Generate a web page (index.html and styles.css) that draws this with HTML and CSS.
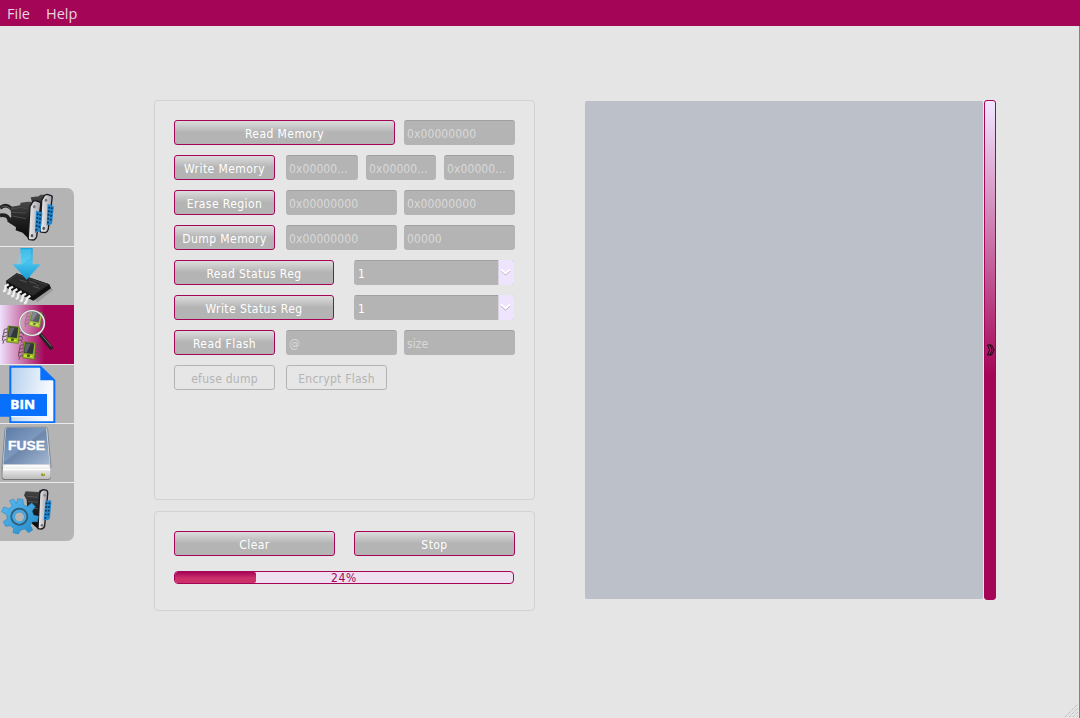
FILE: index.html
```html
<!DOCTYPE html>
<html lang="en">
<head>
<meta charset="utf-8">
<title>Flash tool</title>
<link rel="stylesheet" href="styles.css">
</head>
<body>
<div class="app">
  <nav class="menubar"><span>File</span><span>Help</span></nav>
  <main class="content">
    <aside class="tabs">
      <svg width="0" height="0" class="defs">
        <defs>
          <linearGradient id="metal"><stop offset="0" stop-color="#f0f0f2"/><stop offset="1" stop-color="#a0a0aa"/></linearGradient>
          <linearGradient id="dark" x2="0" y2="1"><stop offset="0" stop-color="#484848"/><stop offset=".5" stop-color="#202020"/><stop offset="1" stop-color="#080808"/></linearGradient>
          <linearGradient id="arrow" x2="0" y2="1"><stop offset="0" stop-color="#18a5dc"/><stop offset=".45" stop-color="#48c3ee"/><stop offset="1" stop-color="#159bd5"/></linearGradient>
          <linearGradient id="page" x2="1" y2=".2"><stop offset="0" stop-color="#b4cfed"/><stop offset="1" stop-color="#fafcff"/></linearGradient>
          <linearGradient id="disk" x2="1" y2="1"><stop offset="0" stop-color="#5b7aa5"/><stop offset=".45" stop-color="#7d98bd"/><stop offset=".5" stop-color="#6d87ab"/><stop offset="1" stop-color="#a7bad5"/></linearGradient>
          <linearGradient id="base" x2="0" y2="1"><stop offset="0" stop-color="#fff"/><stop offset="1" stop-color="#bdbdbd"/></linearGradient>
          <linearGradient id="gear" x2="1" y2="1"><stop offset="0" stop-color="#5bbcf0"/><stop offset="1" stop-color="#2389ca"/></linearGradient>
          <linearGradient id="lens" x2="1" y2="1"><stop offset="0" stop-color="#fff" stop-opacity=".35"/><stop offset="1" stop-color="#fff" stop-opacity=".05"/></linearGradient>
          <g id="plug">
            <path d="M90 80 98 66Q101 62 107 62L119 66Q124 68 122 74L110 170Q108 178 101 180L88 179Q84 178 85 173Z" fill="url(#metal)" stroke="#1a1a1a" stroke-width="4"/>
            <path d="M108 92 125 97Q128 98 127 102L122 151Q121 155 117 155L105 158Z" fill="#2487cc"/>
            <g fill="#062f54"><circle cx="113" cy="103" r="3"/><circle cx="121" cy="105" r="3"/><circle cx="112" cy="114" r="3"/><circle cx="120" cy="116" r="3"/><circle cx="111" cy="125" r="3"/><circle cx="119" cy="128" r="3"/><circle cx="110" cy="137" r="3"/><circle cx="118" cy="140" r="3"/><circle cx="109" cy="149" r="3"/></g>
            <ellipse cx="103" cy="80" rx="4" ry="5" fill="#777"/><ellipse cx="96" cy="167" rx="4" ry="5" fill="#555"/>
          </g>
          <g id="chip">
            <path d="M24 86 13 88 11 98M23 96 11 99 8 111M22 107 9 110 7 122M20 118 11 121 9 131M56 86 66 86 69 95M56 98 66 98 72 107M55 110 65 109 68 119M53 121 64 120 67 128" fill="none" stroke="#5f4a52" stroke-width="2.8"/>
            <path d="M24 78 59 81 55 130 20 126Z" fill="#9dc022" stroke="#55701a" stroke-width="2"/>
            <path d="M28 80 54 83 50 113 24 110Z" fill="#31373c" stroke="#1c2220" stroke-width="1.5"/>
            <path d="M29 82 44 83 32 110 25 109Z" fill="#5d656b"/><path d="M24 119 32 120M39 121 49 122" stroke="#dbe84b" stroke-width="4"/><path d="M34 115 42 116 41 123 33 122Z" fill="#46581d"/>
          </g>
        </defs>
      </svg>
      <div class="tab">
        <svg viewBox="0 24 222 174">
          <path d="M0 84Q17 70 32 84L48 98M0 106Q21 103 26 116T45 126" fill="none" stroke="#222" stroke-width="11"/>
          <path d="M2 82Q18 73 31 87" fill="none" stroke="#777" stroke-width="2"/>
          <path d="M92 52 116 49 121 44 148 44 151 60 132 145 116 143Z" fill="url(#dark)"/>
          <use href="#plug" transform="translate(38 -17) scale(.97)"/>
          <path d="M31 81 60 76 62 68 83 65 98 66 90 80 86 176 68 158 47 151 48 142 21 124 34 110Z" fill="url(#dark)"/>
          <path d="M34 87 62 82 82 86M33 97 78 99M38 108 78 116" fill="none" stroke="#4b4b4b" stroke-width="3"/>
          <use href="#plug"/>
        </svg>
      </div>
      <div class="tab">
        <svg viewBox="0 201 222 174">
          <path d="M101 357 151 321 160 330 112 367Z" fill="#888" opacity=".6"/>
          <path d="M19 302 50 280 148 313 153 325 100 362 19 323Z" fill="#111"/>
          <path d="M19 302 50 280 148 313 99 347Z" fill="#2b2b2b"/><path d="M24 302 51 284 139 314" fill="none" stroke="#444" stroke-width="2"/>
          <path d="M60 300 80 306M87 304 107 311M99 319 119 325M108 315 116 318" stroke="#555" stroke-width="3"/>
          <path d="M26 313 17 318 15 332 9 334M39 320 30 325 28 340 22 342M52 327 43 332 40 347 34 350M65 334 56 339 53 354 47 357M78 341 69 346 66 361 60 364M91 347 82 353 78 367 72 370" fill="none" stroke="#f0f0f0" stroke-width="7"/>
          <path d="M61 204H98V253H122L80 299 38 253H64Z" fill="url(#arrow)"/><path d="M64 208H94V235Q79 240 67 253H48Z" fill="#73daf8" opacity=".4"/>
        </svg>
      </div>
      <div class="tab active">
        <svg viewBox="0 15 222 177">
          <use href="#chip"/>
          <use href="#chip" transform="translate(69 -40) rotate(5 40 100) scale(.94)"/>
          <use href="#chip" transform="translate(48 48)"/>
          <circle cx="96" cy="69" r="37" fill="url(#lens)" stroke="#777" stroke-width="6"/><circle cx="96" cy="69" r="37" fill="none" stroke="#eee" stroke-width="4"/>
          <path d="M115 98 125 108" stroke="#eee" stroke-width="7"/><path d="M123 106 153 143" stroke="#222" stroke-width="12" stroke-linecap="round"/><path d="M124 104 154 139" stroke="#777" stroke-width="3"/>
        </svg>
      </div>
      <div class="tab">
        <svg viewBox="0 195 222 174">
          <path d="M31 200H121L163 241V367H31Z" fill="url(#page)" stroke="#0870fc" stroke-width="6"/>
          <path d="M121 199V241H164Z" fill="#0870fc"/><path d="M0 282H141V350H0Z" fill="#0870fc"/><path d="M33 350H143V284" fill="none" stroke="#ecf6ff" stroke-width="4"/>
          <text x="31" y="328" class="bin-label" textLength="74" lengthAdjust="spacingAndGlyphs">BIN</text>
        </svg>
      </div>
      <div class="tab">
        <svg viewBox="0 12 222 174">
          <path d="M5 140H153V171Q152 180 144 180H13Q5 179 5 171Z" fill="#777"/>
          <path d="M23 22H136Q142 22 143 29L153 142H6L15 29Q16 22 23 22Z" fill="#ddd" stroke="#56687c" stroke-width="2"/>
          <path d="M21 24H138L149 133H10L18 29Z" fill="url(#disk)"/>
          <path d="M8 148Q8 135 18 135H140Q151 135 152 148V169Q152 177 143 177H15Q7 177 7 169Z" fill="url(#base)"/>
          <path d="M9 149H151" stroke="#fff" stroke-width="3"/><ellipse cx="129" cy="164" rx="6" ry="4" fill="#888a12"/><circle cx="130" cy="162" r="2.5" fill="#f6f35c"/>
          <text x="24" y="91" class="fuse-label" textLength="111" lengthAdjust="spacingAndGlyphs">FUSE</text>
        </svg>
      </div>
      <div class="tab">
        <svg viewBox="0 189 222 174">
          <path d="M77 214 116 216 119 210 140 209 133 321 112 325 84 301 80 239 72 226Z" fill="url(#dark)"/>
          <path d="M81 229 113 232M84 244 114 247M91 263 113 266" stroke="#666" stroke-width="2"/>
          <path d="M119 221Q121 211 130 209L140 211Q144 213 143 222L134 317Q133 325 125 327L114 326Z" fill="url(#metal)" stroke="#1a1a1a" stroke-width="4"/>
          <path d="M136 243 151 241Q155 242 154 248L150 293Q149 299 144 300L131 301Z" fill="#2487cc"/>
          <g fill="#062f54"><circle cx="140" cy="250" r="2.8"/><circle cx="148" cy="250" r="2.8"/><circle cx="139" cy="261" r="2.8"/><circle cx="147" cy="261" r="2.8"/><circle cx="138" cy="272" r="2.8"/><circle cx="146" cy="272" r="2.8"/><circle cx="137" cy="283" r="2.8"/><circle cx="145" cy="283" r="2.8"/><circle cx="136" cy="294" r="2.8"/></g>
          <circle cx="134" cy="226" r="4" fill="#888"/><circle cx="126" cy="316" r="4" fill="#777"/>
          <path fill-rule="evenodd" d="M49 251 53 236 69 239 70 254 82 260 95 249 106 260 96 273 101 286 115 289 112 305 97 305 91 316 98 330 85 338 75 327 62 331 55 342 39 338 41 325 31 317 17 319 10 305 22 297 20 284 5 275 11 261 28 266 36 257 29 242 41 237ZM58 276A15 15 0 1 0 59 306A15 15 0 1 0 58 276Z" fill="url(#gear)" stroke="#2d8dc6" stroke-width="2"/>
          <circle cx="58" cy="290" r="24" fill="none" stroke="#315f7c" stroke-width="6"/><circle cx="58" cy="290" r="18" fill="none" stroke="#4aa8de" stroke-width="6"/>
        </svg>
      </div>
    </aside>
    <section class="controls">
      <div class="group commands">
        <div class="row"><button class="btn w221">Read Memory</button><span class="field ml9 w111">0x00000000</span></div>
        <div class="row"><button class="btn w101">Write Memory</button><span class="field ml11 w72">0x00000...</span><span class="field ml8 w70">0x00000...</span><span class="field ml8 w70">0x00000...</span></div>
        <div class="row"><button class="btn w101">Erase Region</button><span class="field ml11 w111">0x00000000</span><span class="field ml7 w111">0x00000000</span></div>
        <div class="row"><button class="btn w101">Dump Memory</button><span class="field ml11 w111">0x00000000</span><span class="field ml7 w111">00000</span></div>
        <div class="row"><button class="btn w160">Read Status Reg</button><span class="combo"><span class="value">1</span><span class="drop"><svg viewBox="0 0 15 25"><path d="M2 10.5 6.5 14.5 11 10.5" class="chevron-shadow"/><path d="M2 9.5 6.5 13.5 11 9.5" class="chevron"/></svg></span></span></div>
        <div class="row"><button class="btn w160">Write Status Reg</button><span class="combo"><span class="value">1</span><span class="drop"><svg viewBox="0 0 15 25"><path d="M2 10.5 6.5 14.5 11 10.5" class="chevron-shadow"/><path d="M2 9.5 6.5 13.5 11 9.5" class="chevron"/></svg></span></span></div>
        <div class="row"><button class="btn w101">Read Flash</button><span class="field ml11 w111">@</span><span class="field ml7 w111">size</span></div>
        <div class="row"><button class="btn disabled w101">efuse dump</button><button class="btn disabled ml11 w101">Encrypt Flash</button></div>
      </div>
      <div class="group actions">
        <div class="row"><button class="btn w161">Clear</button><button class="btn ml19 w161">Stop</button></div>
        <div class="progress"><div class="chunk" style="width:81px"></div><span class="percent">24%</span></div>
      </div>
    </section>
    <div class="log"></div>
    <div class="splitter"><svg viewBox="0 0 10 12"><path d="M1.5 1H4L6.2 6 4 11H1.5L3.6 6ZM4 1H5.5L8.2 6 5.5 11H4"/></svg></div>
  </main>
  <svg class="grip" viewBox="0 0 15 15"><path d="M1 14 14 1M5 14 14 5M9 14 14 9M13 14 14 13"/></svg>
</div>
</body>
</html>
```
FILE: styles.css
```css
* { box-sizing: border-box; }
body { margin: 0; background: #e5e5e5; font: 12px "DejaVu Sans Condensed", "DejaVu Sans", sans-serif; font-stretch: condensed; }
.app { position: relative; width: 1080px; height: 718px; overflow: hidden; }
.app::after { content: ""; position: absolute; right: 0; top: 26px; bottom: 0; width: 1px; background: #8b7d88; }
.menubar { height: 26px; background: #a50557; color: #e7d4e0; display: flex; gap: 16px; padding: 0 7px; font: 14.5px/27px "Open Sans", sans-serif; }
.content { display: flex; align-items: flex-start; padding-top: 74px; }
.tabs { width: 74px; height: 353px; margin-top: 88px; border-radius: 0 7px 7px 0; overflow: hidden; background: #b4b4b4; position: relative; }
.defs { position: absolute; }
.tab { height: 59px; border-bottom: 1px solid #ebebeb; }
.tab svg { display: block; width: 74px; height: 58px; }
.tab:nth-of-type(2) { height: 58px; border: 0; }
.tab:nth-of-type(3) { height: 60px; background: linear-gradient(90deg, #eee0fc 0, #a50557 60%); }
.tab:nth-of-type(3) svg { height: 59px; }
.tab:last-child { border: 0; }
.bin-label { font: bold 39px "Open Sans", sans-serif; fill: #fff; stroke: #fff; stroke-width: 1.5px; }
.fuse-label { font: bold 36px "Liberation Sans", sans-serif; fill: #fff; stroke: #fff; stroke-width: 1px; }
.controls { width: 381px; margin-left: 80px; display: flex; flex-direction: column; gap: 11px; }
.group { border: 1px solid #d2d2d2; border-radius: 4px; background: #e6e6e6; padding: 19px; }
.commands { height: 400px; display: flex; flex-direction: column; gap: 10px; }
.actions { height: 100px; }
.row { display: flex; height: 25px; }
.btn { height: 25px; flex: none; padding: 3px 0 0; border: 1px solid #a50557; border-radius: 3px; background: linear-gradient(#dcdcdc, #b4b4b4 50%); color: #fff; font: inherit; line-height: 18px; letter-spacing: .43px; text-align: center; white-space: nowrap; }
.btn.disabled { border-color: #b4b4b4; background: none; color: #b4b4b4; letter-spacing: .25px; }
.field { flex: none; padding: 2px 3px 0; border-top: 1px solid #a0a0a0; border-radius: 3px; background: #b4b4b4; color: #d9d9d9; line-height: 22px; letter-spacing: .1px; white-space: nowrap; }
.combo { margin-left: 20px; width: 160px; display: flex; border-radius: 3px; overflow: hidden; background: #b4b4b4; color: #fff; }
.value { flex: 1; padding: 2px 4px 0; border-top: 1px solid #a0a0a0; line-height: 22px; }
.drop { width: 16px; background: #eee4fe; border-left: 1px solid #d8d2df; }
.drop svg { display: block; width: 15px; height: 25px; }
.chevron, .chevron-shadow { fill: none; stroke: #fff; stroke-width: 1.8; }
.chevron-shadow { stroke: #aaa0b7; stroke-width: 1.4; }
.w221 { width: 221px; } .w161 { width: 161px; } .w160 { width: 160px; } .w111 { width: 111px; } .w101 { width: 101px; } .w72 { width: 72px; } .w70 { width: 70px; }
.ml7 { margin-left: 7px; } .ml8 { margin-left: 8px; } .ml9 { margin-left: 9px; } .ml11 { margin-left: 11px; } .ml19 { margin-left: 19px; }
.progress { position: relative; width: 340px; height: 13px; margin-top: 15px; border: 1px solid #a50557; border-radius: 4px; background: #eee0f0; overflow: hidden; }
.chunk { height: 100%; border-radius: 0 2px 2px 0; background: linear-gradient(#a50557, #cb3068 55%); }
.percent { position: absolute; inset: 0; line-height: 12px; text-align: center; letter-spacing: .6px; color: #a50557; }
.log { width: 398px; height: 498px; margin: 1px 0 0 50px; border-radius: 2px; background: #bcc0c9; }
.splitter { width: 12px; height: 500px; margin-left: 1px; display: flex; align-items: center; justify-content: center; border: 1px solid #a50557; border-radius: 3px; background: linear-gradient(#f0e6ff, #a50557 55%); }
.splitter svg { flex: none; width: 10px; height: 12px; margin-left: 2px; fill: none; stroke: #170510; stroke-width: 1; }
.grip { position: absolute; right: 1px; bottom: 0; width: 15px; height: 15px; fill: none; stroke: #b5b5b5; stroke-width: 1; stroke-dasharray: 1.2 .8; }
```
